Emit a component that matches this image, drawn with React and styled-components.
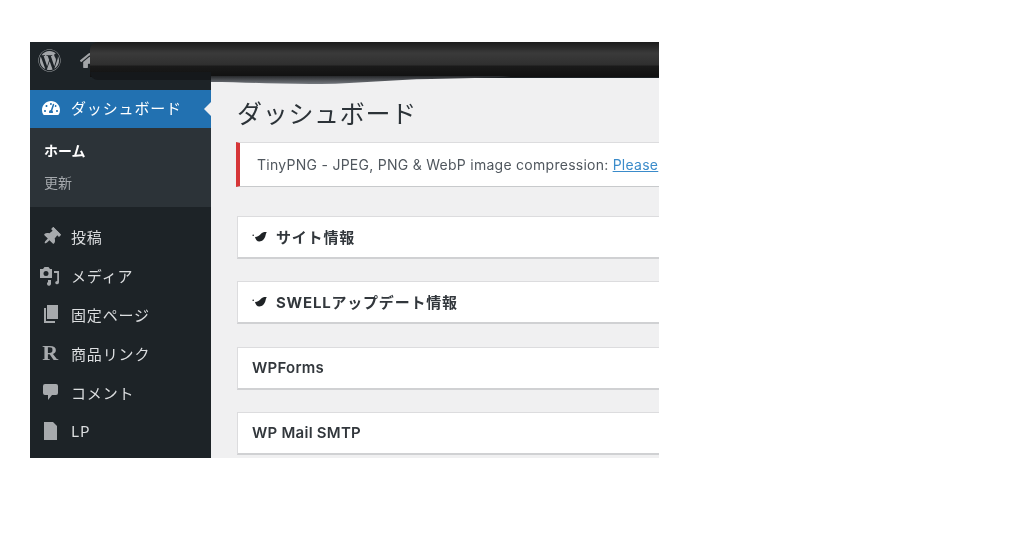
import React from "react";
import styled, { createGlobalStyle } from "styled-components";
import { FaWordpress, FaHome, FaTachometerAlt, FaThumbtack } from "react-icons/fa";

const Global = createGlobalStyle`
  html, body { margin: 0; padding: 0; background: #fff; }
  body { font-family: "Inter", "Noto Sans CJK JP", sans-serif; }
`;
const Frame = styled.div`
  position: relative;
  width: 629px;
  height: 416px;
  margin: 42px 0 0 30px;
  overflow: hidden;
  display: flex;
  flex-direction: column;
  background: #f0f0f1;
  filter: blur(0.55px);
`;
const TopBar = styled.header`
  height: 36px;
  flex: none;
  background: #1d2327;
  display: flex;
  align-items: center;
  gap: 19px;
  padding-left: 8px;
  color: #a2a5a8;
`;
const Scribble = styled.div`
  position: absolute;
  left: 60px;
  top: 0;
  width: 569px;
  height: 35px;
  border-radius: 8px 0 0 0;
  background: linear-gradient(#1c1c1c 0%, #3a3a3a 32%, #303030 64%, #1a1a1a 70%, #111 100%);
`;
const ScribbleFoot = styled.div`
  position: absolute;
  left: 60px;
  top: 30px;
  width: 121px;
  height: 8px;
  background: #15181b;
  border-radius: 0 0 0 12px;
`;
const ScribbleTail = styled.svg`
  position: absolute;
  left: 181px;
  top: 34px;
`;
const Body = styled.div`
  flex: 1;
  display: flex;
  min-height: 0;
`;
const Sidebar = styled.nav`
  width: 181px;
  flex: none;
  background: #1d2327;
  padding-top: 12px;
  font-family: "Noto Sans CJK JP", sans-serif;
`;
const ActiveItem = styled.div`
  position: relative;
  height: 38px;
  box-sizing: border-box;
  padding-bottom: 3px;
  background: #2271b1;
  color: #fff;
  display: flex;
  align-items: center;
  font-size: 15px;
  letter-spacing: 0.85px;
  &::after {
    content: "";
    position: absolute;
    right: 0;
    top: 12px;
    border: 7px solid transparent;
    border-right-color: #f0f0f1;
    border-left-width: 0;
  }
`;
const IconSlot = styled.span`
  width: 41px;
  flex: none;
  display: flex;
  justify-content: center;
  font-size: ${(p) => p.$size || 19}px;
  color: ${(p) => p.$color || "#a7aaad"};
`;
const SubMenu = styled.div`
  height: 79px;
  box-sizing: border-box;
  background: #2c3338;
  padding: 10px 0 0 14px;
`;
const SubItem = styled.div`
  height: 32px;
  line-height: 24px;
  font-size: 14px;
  font-weight: ${(p) => (p.$current ? 700 : 400)};
  color: ${(p) => (p.$current ? "#fff" : "#a5a9ad")};
`;
const Menu = styled.div`
  padding-top: 12px;
  display: flex;
  flex-direction: column;
`;
const MenuItem = styled.div`
  height: 38.8px;
  box-sizing: border-box;
  padding-bottom: 3px;
  display: flex;
  align-items: center;
  color: #dcdee0;
  font-size: 15px;
  letter-spacing: 0.85px;
`;
const RLogo = styled.span`
  font-family: "Liberation Serif", serif;
  font-weight: 700;
  font-size: 22px;
  line-height: 22px;
`;
const Main = styled.main`
  flex: 1;
  min-width: 0;
  padding: 0 0 0 25px;
  overflow: hidden;
`;
const Title = styled.h1`
  margin: 0 0 0 1px;
  padding-top: 19px;
  height: 60px;
  box-sizing: border-box;
  font-family: "Noto Sans CJK JP", sans-serif;
  font-weight: 400;
  font-size: 25px;
  line-height: 30px;
  letter-spacing: 0.7px;
  color: #2c3338;
  white-space: nowrap;
`;
const Notice = styled.div`
  height: 45px;
  box-sizing: border-box;
  width: 460px;
  background: #fff;
  border-left: 4px solid #d63638;
  border-top: 1px solid #dcdcde;
  border-bottom: 1px solid #c8cacc;
  padding: 0 0 1px 17px;
  display: flex;
  align-items: center;
  font-size: 14px;
  letter-spacing: 0.27px;
  color: #50575e;
  white-space: nowrap;
  margin-top: 4px;
`;
const NoticeLink = styled.a`
  margin-left: 4px;
  color: #3a8bca;
  text-decoration: underline;
`;
const Cards = styled.div`
  margin-top: 29px;
  display: flex;
  flex-direction: column;
  gap: 22.3px;
`;
const Card = styled.section`
  height: 43px;
  box-sizing: border-box;
  width: 460px;
  margin-left: 1px;
  background: #fff;
  border: 1px solid #dcdcde;
  border-bottom: 2px solid #d0d1d3;
  border-right: none;
  padding: 0 0 1px 14px;
  display: flex;
  align-items: center;
  gap: 9px;
  font-size: 15px;
  font-weight: ${(p) => (p.$jp ? 700 : 600)};
  letter-spacing: ${(p) => (p.$jp ? "0.8px" : "0.25px")};
  color: #32373c;
`;

const Bird = () => (
  <svg width="15" height="11" viewBox="0 0 15 11">
    <path fill="#1f2326" d="M3 6C5.500 6 7.500 4.500 9 2.800 10.500 1.200 12.800.6 14.800 1.200c-.8.8-1 2-1.300 3.400C12.800 8 10.500 10.500 7.300 10.500 5 10.500 3.600 8.500 3 6Z" />
    <circle cx="1.200" cy="4.300" r="0.800" fill="#1f2326" />
  </svg>
);
const MediaIcon = () => (
  <svg width="23" height="20" viewBox="0 0 23 20">
    <path fill="#a7aaad" fillRule="evenodd" d="M1 3h3l1.500-2h4L11 3h2v9H1Zm6 2a2.500 2.500 0 1 0 0 5 2.500 2.500 0 0 0 0-5Z" />
    <path fill="#a7aaad" d="M15 5h5v11.500a2 2 0 0 1-3.800.6 2 2 0 0 1 2-2.200V7h-3.200ZM9 14h3v3.500a2 2 0 1 1-3-1.500Z" />
  </svg>
);
const PagesIcon = () => (
  <svg width="18" height="20" viewBox="0 0 18 20">
    <path fill="#a7aaad" d="M5 1h11v14H5Z" />
    <path fill="#a7aaad" d="M2 4h2v13h9v2H2Z" />
  </svg>
);
const CommentIcon = () => (
  <svg width="17" height="20" viewBox="0 0 17 20">
    <path fill="#a7aaad" d="M3 2h11a2 2 0 0 1 2 2v7a2 2 0 0 1-2 2h-4l-4 5v-5H3a2 2 0 0 1-2-2V4a2 2 0 0 1 2-2Z" />
  </svg>
);
const PageIcon = () => (
  <svg width="15" height="20" viewBox="0 0 15 20">
    <path fill="#a7aaad" d="M1 1h9l4 4v14H1Z" />
  </svg>
);

const items = [
  { label: "投稿", icon: <FaThumbtack size={18} style={{ transform: "rotate(45deg)" }} /> },
  { label: "メディア", icon: <MediaIcon /> },
  { label: "固定ページ", icon: <PagesIcon /> },
  { label: "商品リンク", icon: <RLogo>R</RLogo> },
  { label: "コメント", icon: <CommentIcon /> },
  { label: "LP", icon: <PageIcon /> },
];

export default function App() {
  return (
    <>
      <Global />
      <Frame>
        <TopBar>
          <FaWordpress size={23} />
          <FaHome size={19} />
        </TopBar>
        <Scribble />
        <ScribbleFoot />
        <ScribbleTail width="300" height="10" viewBox="0 0 300 10">
          <defs>
            <linearGradient id="tailFade" x1="0" y1="0" x2="0" y2="1">
              <stop offset="0" stopColor="#26282b" />
              <stop offset="1" stopColor="#767a80" />
            </linearGradient>
          </defs>
          <path fill="url(#tailFade)" d="M0 0H300C280 2 250 2 220 3 180 3.500 150 7.500 110 8 70 8.500 30 6 0 6Z" />
        </ScribbleTail>
        <Body>
          <Sidebar>
            <ActiveItem>
              <IconSlot $color="#fff" $size={18}><FaTachometerAlt /></IconSlot>
              ダッシュボード
            </ActiveItem>
            <SubMenu>
              <SubItem $current>ホーム</SubItem>
              <SubItem>更新</SubItem>
            </SubMenu>
            <Menu>
              {items.map((it) => (
                <MenuItem key={it.label}>
                  <IconSlot>{it.icon}</IconSlot>
                  {it.label}
                </MenuItem>
              ))}
            </Menu>
          </Sidebar>
          <Main>
            <Title>ダッシュボード</Title>
            <Notice>
              TinyPNG - JPEG, PNG &amp; WebP image compression:
              <NoticeLink>Please</NoticeLink>
            </Notice>
            <Cards>
              <Card $jp><Bird />サイト情報</Card>
              <Card $jp><Bird />SWELLアップデート情報</Card>
              <Card>WPForms</Card>
              <Card>WP Mail SMTP</Card>
            </Cards>
          </Main>
        </Body>
      </Frame>
    </>
  );
}
